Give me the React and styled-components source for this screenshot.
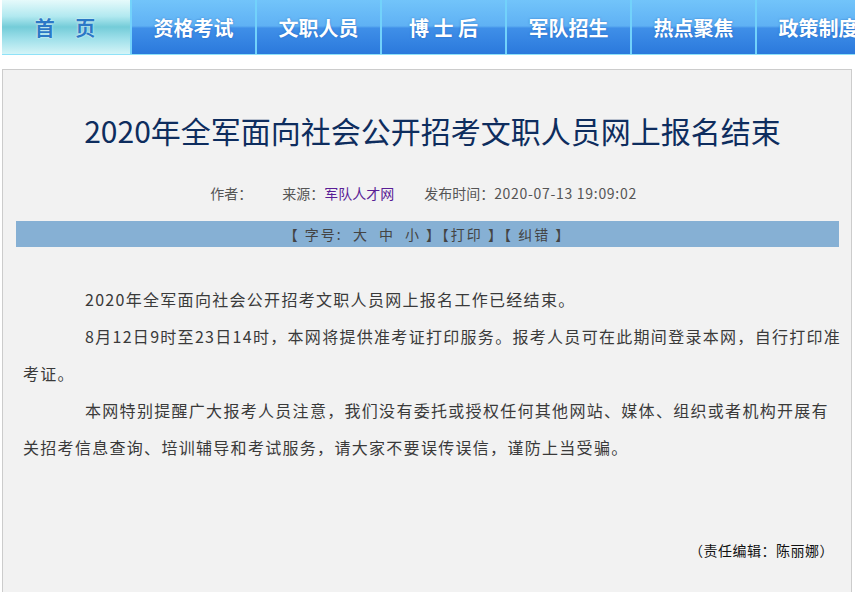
import React from 'react';
import styled, { createGlobalStyle } from 'styled-components';

const GlobalStyle = createGlobalStyle`
  html, body {
    margin: 0;
    padding: 0;
    background: #fff;
  }
  body {
    font-family: "Noto Sans CJK SC", "Noto Sans", sans-serif;
  }
`;

const Page = styled.div`
  padding: 0 3px 0 2px;
  overflow: hidden;
  height: 592px;
`;

const Nav = styled.ul`
  display: flex;
  margin: 0;
  padding: 0;
  list-style: none;
  height: 54px;
  border-bottom: 1px solid #8fe2f8;
  white-space: nowrap;
  width: 880px;
`;

const Tab = styled.li`
  flex: none;
  box-sizing: border-box;
  width: ${p => (p.$active ? '128px' : '125px')};
  height: 54px;
  display: flex;
  align-items: center;
  justify-content: center;
  padding-left: ${p => (p.$active ? '6px' : '0')};
  font-size: 20px;
  font-weight: bold;
  letter-spacing: ${p => (p.$active ? '8px' : '0')};
  color: ${p => (p.$active ? '#2b78c6' : '#fff')};
  text-shadow: ${p => (p.$active ? '0 0 2px #fff' : '0 0 2px rgba(20,80,170,.6)')};
  border-left: ${p => (p.$active ? 'none' : '2px solid #72d2fb')};
  background: ${p =>
    p.$active
      ? 'linear-gradient(#e6fafb 0%, #b2e9f0 30%, #74ccd8 50%, #9fe0ea 72%, #d4f4f7 100%)'
      : 'linear-gradient(#72c4fa 0%, #5fb1f4 48%, #3f8fe8 52%, #2b79dc 100%)'};
`;

const Article = styled.div`
  margin-top: 14px;
  border: 1px solid #cccccc;
  background: #f2f2f2;
  padding: 0 12px 40px 13px;
  min-height: 560px;
`;

const Title = styled.h1`
  margin: 40px 0 0;
  padding-left: 10px;
  font-size: 30px;
  line-height: 40px;
  font-weight: normal;
  text-align: center;
  color: #0e2d5e;
`;

const Meta = styled.div`
  margin-top: 31px;
  padding-right: 8px;
  font-size: 14px;
  line-height: 24px;
  color: #555;
  text-align: center;
`;

const MetaItem = styled.span`
  margin: 0 15px;
`;

const DateText = styled.span`
  letter-spacing: 0.7px;
`;

const SourceLink = styled.a`
  color: #5a1e96;
  text-decoration: none;
`;

const ToolBar = styled.div`
  margin-top: 16px;
  height: 26px;
  line-height: 26px;
  background: #86b0d4;
  text-align: center;
  font-size: 14px;
  color: #444;
  letter-spacing: 2px;
`;

const ToolLink = styled.span`
  margin: 0 5px;
`;

const Body = styled.div`
  margin: 34px -5px 0 7px;
  font-size: 16px;
  line-height: 37px;
  letter-spacing: 1.3px;
  color: #3a3a3a;
`;

const Para = styled.p`
  margin: 0;
  text-indent: 62px;
`;

const Editor = styled.div`
  margin-top: 72px;
  padding-right: 5px;
  text-align: right;
  font-size: 14px;
  line-height: 24px;
  letter-spacing: 0.5px;
  color: #111;
`;

const tabs = ['首 页', '资格考试', '文职人员', '博 士 后', '军队招生', '热点聚焦', '政策制度'];

export default function App() {
  return (
    <>
      <GlobalStyle />
      <Page>
        <Nav>
          {tabs.map((t, i) => (
            <Tab key={t} $active={i === 0}>{t}</Tab>
          ))}
        </Nav>
        <Article>
          <Title>2020年全军面向社会公开招考文职人员网上报名结束</Title>
          <Meta>
            <MetaItem>作者：</MetaItem>
            <MetaItem>来源：<SourceLink href="#">军队人才网</SourceLink></MetaItem>
            <MetaItem>发布时间：<DateText>2020-07-13 19:09:02</DateText></MetaItem>
          </Meta>
          <ToolBar>
            【 字号: <ToolLink>大</ToolLink><ToolLink>中</ToolLink><ToolLink>小</ToolLink>】【打印 】【 纠错 】
          </ToolBar>
          <Body>
            <Para>2020年全军面向社会公开招考文职人员网上报名工作已经结束。</Para>
            <Para>8月12日9时至23日14时，本网将提供准考证打印服务。报考人员可在此期间登录本网，自行打印准考证。</Para>
            <Para>本网特别提醒广大报考人员注意，我们没有委托或授权任何其他网站、媒体、组织或者机构开展有关招考信息查询、培训辅导和考试服务，请大家不要误传误信，谨防上当受骗。</Para>
          </Body>
          <Editor>（责任编辑：陈丽娜）</Editor>
        </Article>
      </Page>
    </>
  );
}
